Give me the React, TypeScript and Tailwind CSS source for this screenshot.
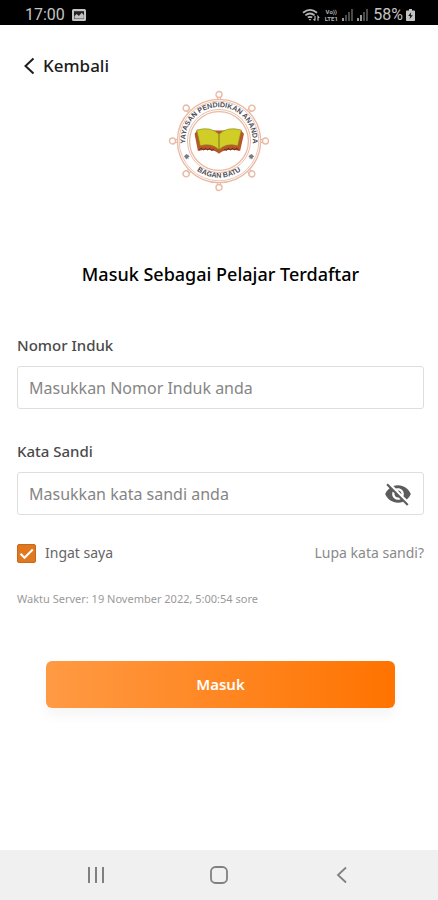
import { useState } from 'react'
import { MdVisibility, MdVisibilityOff } from 'react-icons/md'

const knobs = [0, 45, 90, 135, 180, 225, 270, 315]

function StatusBar() {
  return (
    <div className="flex h-[25px] items-center justify-between bg-black pt-1 pr-[23px] pl-[25px] font-[Roboto,sans-serif] text-base leading-5 text-[#c4c4c4]">
      <div className="flex items-center gap-[7px]">
        <span>17:00</span>
        <svg viewBox="0 0 14 12" className="h-3 w-3.5">
          <rect width="14" height="12" rx="1.5" fill="#c4c4c4" />
          <path d="M2 9.8V2.2h10v7.6z" fill="#222" />
          <path d="M2.5 9.5V7l2.3-2 2 2 3-3.2 2 2.4v3.3z" fill="#c4c4c4" />
        </svg>
      </div>
      <div className="flex items-center gap-[3px]">
        {/* Wifi */}
        <svg viewBox="0 0 18 14" className="h-3.5 w-[18px]" fill="none" stroke="#b5b5b5" strokeWidth="1.8">
          <path d="M1 4.8Q8 -1 15 4.8" />
          <path d="M3.4 7.4Q8 3.6 12.6 7.4" />
          <path d="M5.8 9.6Q8 8 10.2 9.6" />
          <path d="M6.6 11h2.8L8 12.8z" fill="#b5b5b5" stroke="none" />
          <path d="M13 8v4.6M11.6 11.2l1.4 1.5M16 12.8V8.4l1.2 1.4" strokeWidth="1.2" />
        </svg>
        <div className="flex w-4 flex-col items-center text-[6px] leading-[7px] font-bold text-[#b5b5b5]">
          <span>Vo))</span>
          <span>LTE1</span>
        </div>
        {/* Signal of both SIM cards */}
        <svg viewBox="0 0 28 12" className="h-3 w-7" fill="#4a4a4a">
          <rect x="0" y="9" width="2" height="3" fill="#999" />
          <rect x="3" y="6" width="2" height="6" />
          <rect x="6" y="3" width="2" height="9" />
          <rect x="9" y="0" width="2" height="12" />
          <rect x="15" y="9" width="2" height="3" fill="#999" />
          <rect x="18" y="6" width="2" height="6" fill="#999" />
          <rect x="21" y="3" width="2" height="9" />
          <rect x="24" y="0" width="2" height="12" />
        </svg>
        <span>58%</span>
        <svg viewBox="0 0 9 12" className="h-3 w-[9px]">
          <path d="M3 0h3v1.5h2.2q.8 0 .8.8v9q0 .7-.8.7H.8Q0 12 0 11.3V2.300q0-.8.8-.8H3z" fill="#c4c4c4" />
          <path d="M5.200 3.200 2.200 7h2l-.6 3L6.800 6.200h-2z" fill="#111" />
        </svg>
      </div>
    </div>
  )
}

function SchoolLogo() {
  return (
    <svg viewBox="0 0 100 100" className="mx-auto size-[104px]" role="img" aria-label="Yayasan Pendidikan Ananda">
      <defs>
        <path id="arc-top" d="M19.100 60A32.500 32.500 0 1 1 80.900 60" />
        <path id="arc-bottom" d="M18 66.500A36.600 36.600 0 0 0 82 66.500" />
      </defs>
      <g fill="none" stroke="#e9b9a4">
        {knobs.map((angle) => (
          <g key={angle} transform={`rotate(${angle} 50 50)`}>
            <circle cx="50" cy="5.300" r="2.900" strokeWidth="1.300" />
            <path d="M48.500 8v2M51.500 8v2" strokeWidth="1" />
          </g>
        ))}
        <circle cx="50" cy="50" r="40" strokeWidth="1.300" />
        <circle cx="50" cy="50" r="38.300" strokeWidth="0.800" />
        <circle cx="50" cy="50" r="30.300" strokeWidth="0.900" />
        <circle cx="50" cy="50" r="28.300" strokeWidth="1.200" />
      </g>
      <g fill="#4d4d55" fontFamily="Liberation Sans, sans-serif" fontSize="6.800" fontWeight="700">
        <text textAnchor="middle">
          <textPath href="#arc-top" startOffset="50%">YAYASAN PENDIDIKAN ANANDA</textPath>
        </text>
        <text textAnchor="middle">
          <textPath href="#arc-bottom" startOffset="50%">BAGAN BATU</textPath>
        </text>
      </g>
      <g stroke="#777782" strokeWidth="1">
        <path d="M16.500 65h5M19 62.500v5M17.300 63.300l3.400 3.400M20.700 63.300l-3.400 3.400" />
        <path d="M78.500 65h5M81 62.500v5M79.300 63.300l3.400 3.400M82.700 63.300l-3.400 3.400" />
      </g>
      {/* Open book */}
      <path d="M29 40 26.500 43l3.200 16.500Q42 56.500 48.500 61q1.500 2 3 0Q58 56.500 70.300 59.500L74 43l-2.800-3z" fill="#b8562b" />
      <path d="M31 58.500l2-1.500 2 1.500 2-1.500 2 1.500 2-1.200 2 1.700 2-1M55 58l2 .8 2-1.600 2 1.300 2-1.500 2 1.500 2-1.500 2 1.500" fill="none" stroke="#6e2c16" strokeWidth="1" />
      <path d="M50 43.500Q42 35.500 28.500 39.500L32 54.500Q43 51.500 50 58.500Q57 51.500 68 54.500L71.500 39.500Q58 35.500 50 43.500z" fill="#cfcd26" stroke="#8a851c" strokeWidth="0.600" />
      <path d="M50 43.500v15" stroke="#77731b" strokeWidth="0.900" />
    </svg>
  )
}

function NavigationBar() {
  return (
    <nav className="flex h-[50px] items-center bg-[#f0f0f0] px-[35px] text-[#808080]">
      <button aria-label="Recent apps" className="flex flex-1 justify-center">
        <svg viewBox="0 0 18 18" className="size-[18px]" stroke="currentColor" strokeWidth="2">
          <path d="M2 1v16M9 1v16M16 1v16" />
        </svg>
      </button>
      <button aria-label="Home" className="flex flex-1 justify-center">
        <svg viewBox="0 0 18 18" className="size-[18px]" fill="none" stroke="currentColor" strokeWidth="1.800">
          <rect x="1" y="1" width="16" height="16" rx="4.500" />
        </svg>
      </button>
      <button aria-label="Back" className="flex flex-1 justify-center">
        <svg viewBox="0 0 18 18" className="size-[18px]" fill="none" stroke="currentColor" strokeWidth="1.800">
          <path d="M13 1.500 5 9l8 7.500" />
        </svg>
      </button>
    </nav>
  )
}

export default function App() {
  const [remember, setRemember] = useState(true)
  const [showPassword, setShowPassword] = useState(false)

  return (
    <div className="flex min-h-screen flex-col bg-white font-['Noto_Sans',sans-serif]">
      <StatusBar />

      <main className="flex flex-1 flex-col pr-[14px] pl-[17px]">
        <a href="#" className="mt-[29px] ml-1.5 flex items-center gap-2 self-start text-[17px] leading-6 font-medium text-[#1c1c1c]">
          <svg viewBox="0 0 12 18" className="h-[18px] w-3" fill="none" stroke="currentColor" strokeWidth="2">
            <path d="M10.500 1.500 2.500 9l8 7.500" />
          </svg>
          Kembali
        </a>

        <div className="mt-[11px] mr-1">
          <SchoolLogo />
        </div>

        <h1 className="mt-[69px] text-center text-lg leading-6 font-medium text-black">
          Masuk Sebagai Pelajar Terdaftar
        </h1>

        <form className="mt-[47px] flex flex-col" onSubmit={(e) => e.preventDefault()}>
          <label htmlFor="student-id" className="text-[15px] leading-6 font-medium text-[#4a4a4a]">
            Nomor Induk
          </label>
          <input
            id="student-id"
            type="text"
            placeholder="Masukkan Nomor Induk anda"
            className="mt-[9px] h-[43px] w-full rounded-[3px] border border-[#dedede] px-[11px] text-base text-[#4a4a4a] outline-none placeholder:text-[#858585]"
          />

          <label htmlFor="password" className="mt-[30px] text-[15px] leading-6 font-medium text-[#4a4a4a]">
            Kata Sandi
          </label>
          <div className="mt-[9px] flex h-[43px] items-center rounded-[3px] border border-[#dedede] px-[11px]">
            <input
              id="password"
              type={showPassword ? 'text' : 'password'}
              placeholder="Masukkan kata sandi anda"
              className="min-w-0 flex-1 text-base text-[#4a4a4a] outline-none placeholder:text-[#858585]"
            />
            <button type="button" aria-label="Tampilkan kata sandi" onClick={() => setShowPassword(!showPassword)}>
              {showPassword ? (
                <MdVisibility className="size-7 text-[#5c5c5c]" />
              ) : (
                <MdVisibilityOff className="size-7 text-[#5c5c5c]" />
              )}
            </button>
          </div>

          <div className="mt-[26px] flex items-center justify-between text-sm leading-6">
            <label className="flex items-center gap-[9px] text-[#666]">
              <span className="relative size-[19px]">
                <input
                  type="checkbox"
                  checked={remember}
                  onChange={(e) => setRemember(e.target.checked)}
                  className="block size-[19px] appearance-none rounded-xs border border-[#c9691d] checked:bg-[#e07820]"
                />
                {remember && (
                  <svg viewBox="0 0 19 19" className="pointer-events-none absolute inset-0" fill="none" stroke="#fff" strokeWidth="2">
                    <path d="M3.500 9.800 7.500 13.800 15.800 5.500" />
                  </svg>
                )}
              </span>
              Ingat saya
            </label>
            <a href="#" className="text-[#8a8a8a]">
              Lupa kata sandi?
            </a>
          </div>

          <p className="mt-6 text-[11px] leading-5 text-[#9a9a9a]">
            Waktu Server: 19 November 2022, 5:00:54 sore
          </p>

          <button
            type="submit"
            className="mx-[29px] mt-[52px] h-[47px] rounded-md bg-linear-to-r/srgb from-[#ff9a44] to-[#ff7300] text-[15px] font-semibold text-white shadow-[0_8px_12px_rgba(0,0,0,0.04)]"
          >
            Masuk
          </button>
        </form>
      </main>

      <NavigationBar />
    </div>
  )
}
